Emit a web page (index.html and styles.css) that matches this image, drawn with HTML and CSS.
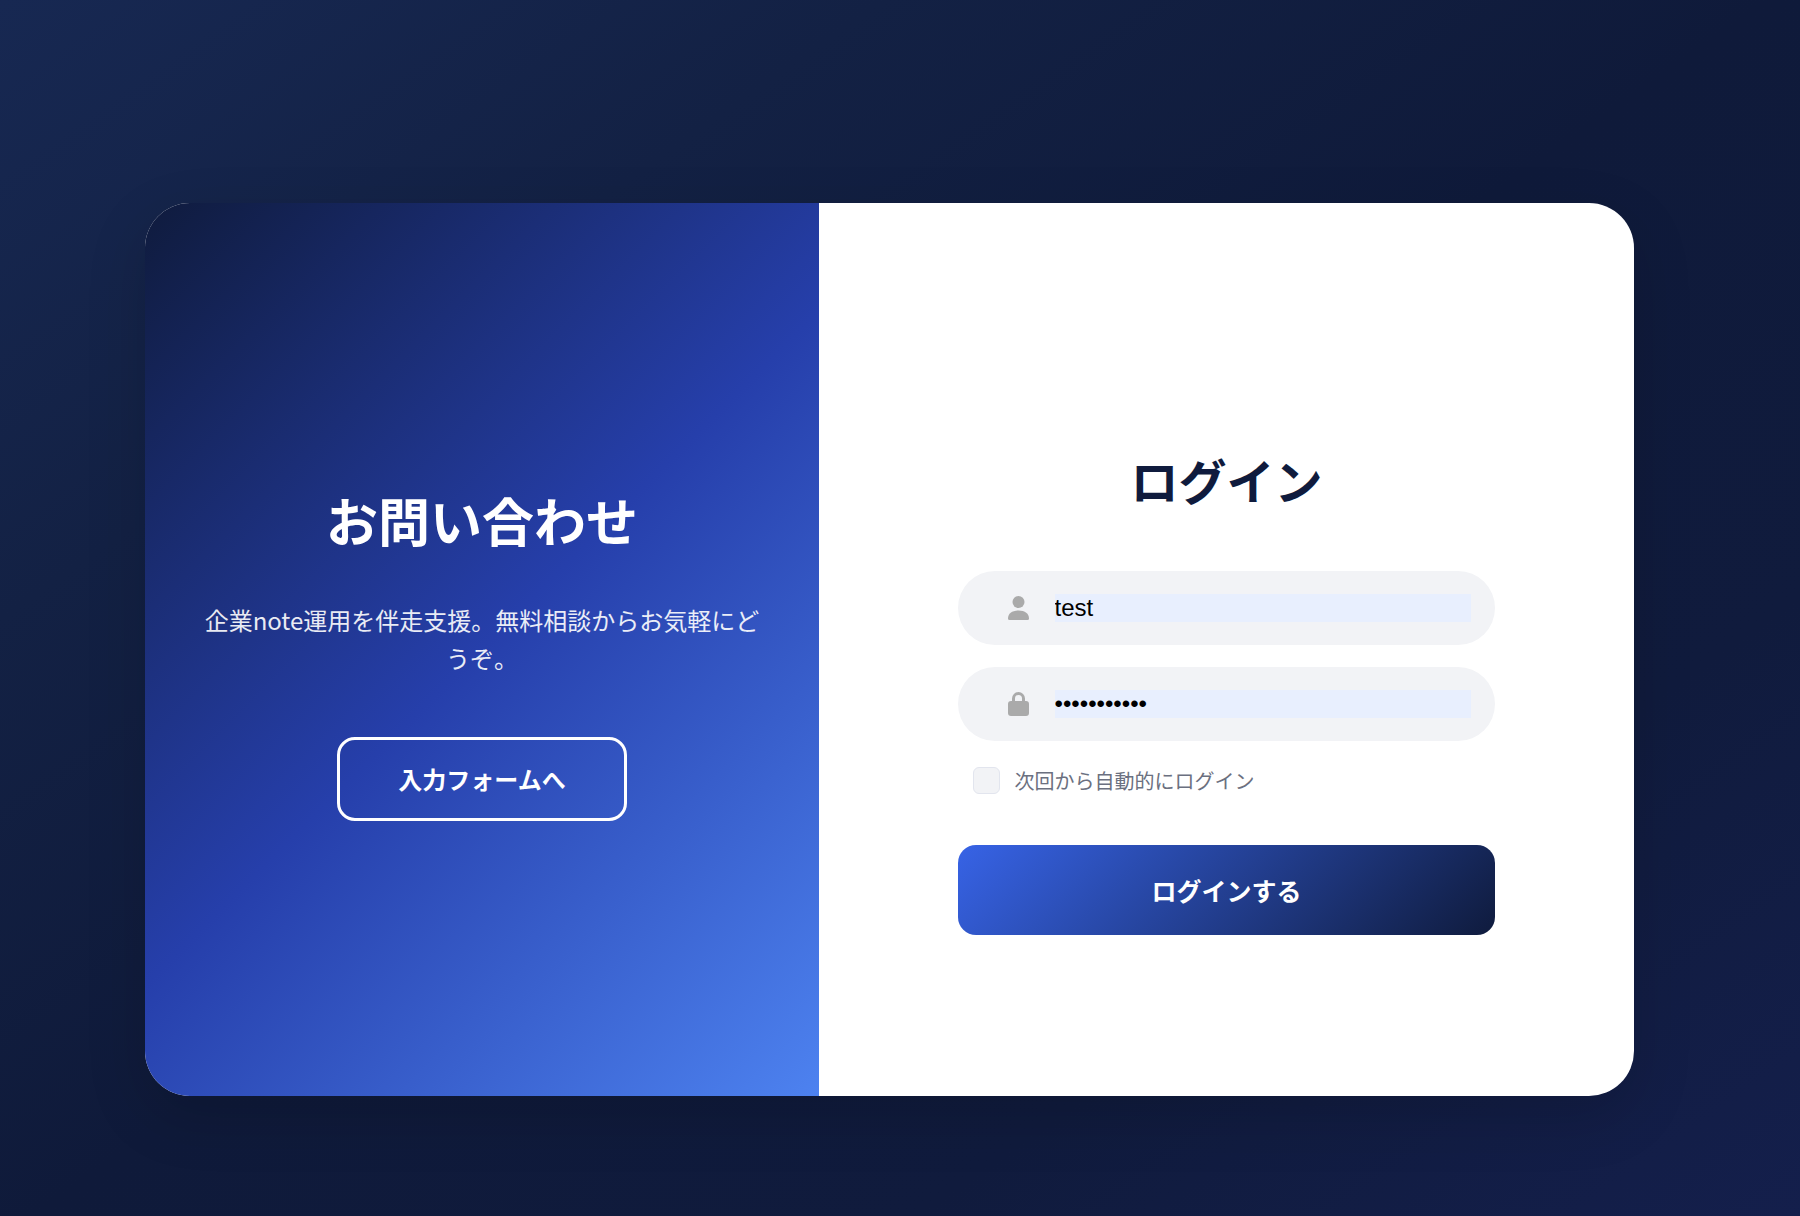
FILE: index.html
```html
<!DOCTYPE html>
<html lang="ja">
  <head>
    <meta charset="UTF-8" />
    <meta name="viewport" content="width=device-width, initial-scale=1.0" />
    <title>ログイン</title>
    <link rel="stylesheet" href="styles.css">
  </head>
  <body>
    <main class="container">
      <section class="contact-panel">
        <h2>お問い合わせ</h2>
        <p>企業note運用を伴走支援。無料相談からお気軽にどうぞ。</p>
        <button type="button" class="btn-outline">入力フォームへ</button>
      </section>
      <section class="login-panel">
        <form id="login-form">
          <h1>ログイン</h1>
          <div class="input-field">
            <label for="username" aria-label="ユーザー名">
              <svg viewBox="0 0 21 24" width="21" height="24">
                <circle cx="10.5" cy="6" r="6" />
                <path d="M0 22.5C0 17.5 4 14.5 10.5 14.5S21 17.5 21 22.5Q21 24 19.5 24H1.5Q0 24 0 22.5Z" />
              </svg>
            </label>
            <input type="text" id="username" name="username" value="test" required />
          </div>
          <div class="input-field">
            <label for="password" aria-label="パスワード">
              <svg viewBox="0 0 21 24" width="21" height="24">
                <path d="M5.5 11V6.5a5 5 0 0 1 10 0V11" fill="none" stroke="#aaa" stroke-width="3" />
                <rect y="9" width="21" height="15" rx="3" />
              </svg>
            </label>
            <input type="password" id="password" name="password" value="password123" required />
          </div>
          <div class="remember">
            <input type="checkbox" id="remember" name="remember" />
            <label for="remember">次回から自動的にログイン</label>
          </div>
          <button type="submit" class="btn-login">ログインする</button>
        </form>
      </section>
    </main>
  </body>
</html>
```

FILE: styles.css
```css
* {
  box-sizing: border-box;
  margin: 0;
  padding: 0;
}
body {
  min-height: 100vh;
  padding: 203px 166px 120px 145px;
  font-family: "Noto Sans CJK JP", sans-serif;
  background: linear-gradient(145deg, #172852 0%, #132144 25%, #0f1a3a 50%, #101b3d 75%, #141f4c 100%);
}
.container {
  display: grid;
  grid-template-columns: 674fr 815fr;
  min-height: 893px;
  border-radius: 45px;
  overflow: hidden;
  background: #fff;
  box-shadow: 0 20px 60px rgba(0, 0, 0, 0.15);
}
.contact-panel,
.login-panel {
  display: flex;
  flex-direction: column;
  align-items: center;
  justify-content: center;
}
.contact-panel {
  padding: 0 56px;
  color: #fff;
  text-align: center;
  background: linear-gradient(135deg, #0f1b3d 0%, #263fab 50%, #4d82f0 100%);
}
.contact-panel h2 {
  margin-bottom: 40px;
  font-size: 52px;
  font-weight: 700;
  line-height: 82px;
}
.contact-panel p {
  margin-bottom: 60px;
  font-size: 24px;
  line-height: 38px;
  opacity: 0.9;
}
button {
  font-family: inherit;
  font-weight: 700;
  color: #fff;
  border: none;
  border-radius: 18px;
  cursor: pointer;
}
.btn-outline {
  height: 84px;
  padding: 0 58px;
  font-size: 24px;
  background: transparent;
  border: 3px solid #fff;
}
#login-form {
  width: 66%;
  padding-top: 78px;
}
#login-form h1 {
  margin-bottom: 56px;
  font-size: 48px;
  font-weight: 700;
  line-height: 72px;
  text-align: center;
  color: #0f1b3d;
}
.input-field {
  display: flex;
  align-items: center;
  height: 74px;
  margin-bottom: 22px;
  padding: 0 24px 0 50px;
  border-radius: 37px;
  background: #f2f3f6;
}
.input-field label {
  display: flex;
  margin-right: 26px;
}
.input-field svg {
  fill: #aaa;
}
.input-field input {
  flex: 1;
  height: 28px;
  border: none;
  outline: none;
  font-family: "Liberation Sans", Arial, sans-serif;
  font-size: 24px;
  color: #000;
  background: #e8effe;
}
.remember {
  display: flex;
  align-items: center;
  gap: 15px;
  height: 36px;
  margin-bottom: 46px;
  padding-left: 15px;
}
.remember input {
  appearance: none;
  width: 27px;
  height: 27px;
  border: 1px solid #e2e5ee;
  border-radius: 6px;
  background: #f2f3f6;
}
.remember label {
  font-size: 20px;
  color: #6b7080;
}
.btn-login {
  width: 100%;
  height: 90px;
  font-size: 25px;
  background: linear-gradient(135deg, #3763e6 0%, #0f1b3d 100%);
}
```
